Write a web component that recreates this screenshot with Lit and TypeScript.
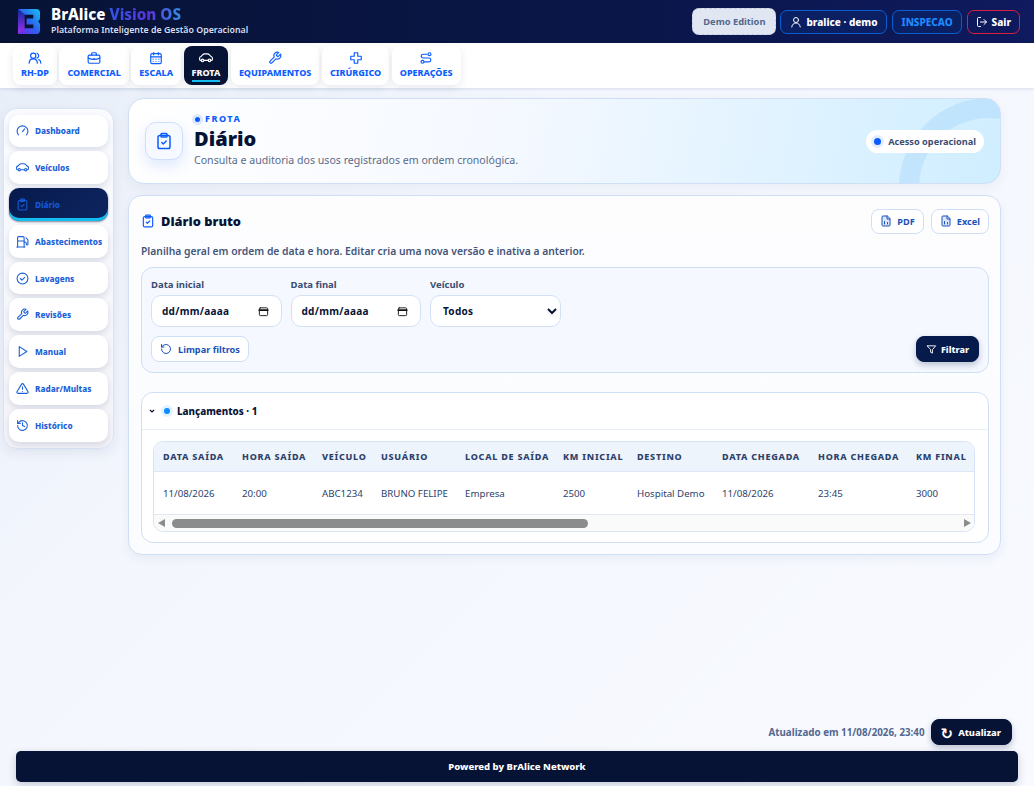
import { LitElement, html, css, svg } from 'lit';
import { customElement } from 'lit/decorators.js';

const icon = (body: unknown, size = 14) => html`<svg
  width=${size}
  height=${size}
  viewBox="0 0 24 24"
  fill="none"
  stroke="currentColor"
  stroke-width="2"
  stroke-linecap="round"
  stroke-linejoin="round"
>${body}</svg>`;

const icons = {
  users: svg`<circle cx="9" cy="8" r="4.500"/><path d="M2 21c0-4.500 3-7.500 7-7.500s7 3 7 7.500"/><path d="M15.500 3.800a4.500 4.500 0 0 1 0 8.400"/><path d="M18.500 14.500c2.200 1 3.500 3.400 3.500 6.500"/>`,
  briefcase: svg`<rect x="2" y="7" width="20" height="14" rx="2"/><path d="M8 7V4.500A1.500 1.500 0 0 1 9.500 3h5A1.500 1.500 0 0 1 16 4.500V7"/><path d="M2 12c6 3 14 3 20 0"/><path d="M12 13v1.500"/>`,
  calendar: svg`<rect x="3" y="4.500" width="18" height="17" rx="2"/><path d="M3 10h18M8 2.500v4M16 2.500v4"/><path d="M7 14h.01M12 14h.01M17 14h.01M7 18h.01M12 18h.01M17 18h.01"/>`,
  car: svg`<path d="M3 16H2.500C1.500 16 1 15 1 14v-2c0-1.500 1.500-2.500 3-3l2-2.500C7 5.500 8 5 9.500 5h5c1.500 0 2.500.5 3.500 1.500l2 2.500c1.800.5 3 1.500 3 3v2c0 1-.5 2-1.500 2H21"/><circle cx="6" cy="16" r="2.200"/><circle cx="18" cy="16" r="2.200"/><path d="M8.500 16h7"/>`,
  wrench: svg`<path d="M14.700 6.300a1 1 0 0 0 0 1.400l1.600 1.600a1 1 0 0 0 1.400 0l3.800-3.800a6 6 0 0 1-7.900 7.900l-6.900 6.900a2.100 2.100 0 0 1-3-3l6.900-6.900a6 6 0 0 1 7.900-7.900z"/>`,
  plus: svg`<path d="M9 3h6v6h6v6h-6v6H9v-6H3V9h6z"/>`,
  ops: svg`<path d="M14 5.500H7a3 3 0 0 0 0 6.500h10a3 3 0 0 1 0 6.500H9"/><circle cx="18" cy="5.500" r="2.500"/><circle cx="6" cy="18.500" r="2.500"/>`,
  user: svg`<circle cx="12" cy="8" r="5"/><path d="M3.500 22c.8-5 4-8 8.500-8s7.700 3 8.500 8"/>`,
  logout: svg`<path d="M9 21H5a2 2 0 0 1-2-2V5a2 2 0 0 1 2-2h4"/><path d="M16 17l5-5-5-5"/><path d="M21 12H9"/>`,
  gauge: svg`<path d="M4.500 20a10 10 0 1 1 15 0"/><path d="M12 14l4-5"/>`,
  clipboard: svg`<rect x="4" y="4.500" width="16" height="17.500" rx="2.500"/><rect x="8" y="2" width="8" height="4.500" rx="1"/><path d="M9 14l2 2 4-4"/>`,
  fuel: svg`<path d="M3 22V5a2 2 0 0 1 2-2h8a2 2 0 0 1 2 2v17"/><path d="M1.500 22h15"/><path d="M3 11h12"/><path d="M15 13h2a2 2 0 0 1 2 2v2a1.500 1.500 0 0 0 3 0V9l-3.500-3.500"/>`,
  check: svg`<circle cx="12" cy="12" r="10"/><path d="M8 12l3 3 5-5"/>`,
  play: svg`<path d="M6 3l14 9-14 9z"/>`,
  alert: svg`<path d="M10.300 3.900L1.800 18a2 2 0 0 0 1.700 3h17a2 2 0 0 0 1.700-3L13.700 3.900a2 2 0 0 0-3.400 0z"/><path d="M12 9v4.500M12 17.500h.01"/>`,
  history: svg`<path d="M3 12a9 9 0 1 0 3-6.700L3 8"/><path d="M3 3v5h5"/><path d="M12 7v5l4 2"/>`,
  file: svg`<path d="M14 2H6a2 2 0 0 0-2 2v16a2 2 0 0 0 2 2h12a2 2 0 0 0 2-2V8z" fill="#dbe6f8"/><path d="M14 2v6h6"/><path d="M9 18v-5M15 18v-3"/>`,
  cal: svg`<rect x="3" y="4" width="18" height="17" rx="2"/><path d="M3 9h18" stroke-width="4"/>`,
  reset: svg`<path d="M3 12a9 9 0 1 0 3-6.700L3 8"/><path d="M3 3v5h5"/>`,
  filter: svg`<path d="M3 4h18l-7 8.500V20l-4-2v-5.500z"/>`,
};

const topTabs = [
  ['RH-DP', icons.users],
  ['COMERCIAL', icons.briefcase],
  ['ESCALA', icons.calendar],
  ['FROTA', icons.car],
  ['EQUIPAMENTOS', icons.wrench],
  ['CIRÚRGICO', icons.plus],
  ['OPERAÇÕES', icons.ops],
] as const;

const sideItems = [
  ['Dashboard', icons.gauge],
  ['Veículos', icons.car],
  ['Diário', icons.clipboard],
  ['Abastecimentos', icons.fuel],
  ['Lavagens', icons.check],
  ['Revisões', icons.wrench],
  ['Manual', icons.play],
  ['Radar/Multas', icons.alert],
  ['Histórico', icons.history],
] as const;

const columns = [
  ['Data saída', 79],
  ['Hora saída', 80],
  ['Veículo', 59],
  ['Usuário', 84],
  ['Local de saída', 98],
  ['KM inicial', 74],
  ['Destino', 85],
  ['Data chegada', 96],
  ['Hora chegada', 98],
  ['KM final', 67],
] as const;
const row = ['11/08/2026', '20:00', 'ABC1234', 'BRUNO FELIPE', 'Empresa', '2500', 'Hospital Demo', '11/08/2026', '23:45', '3000'];

@customElement('app-root')
export class AppRoot extends LitElement {
  static styles = css`
    :host {
      display: flex;
      flex-direction: column;
      height: 786px;
      overflow: hidden;
      font-family: 'Noto Sans', sans-serif;
      color: #071335;
      background: linear-gradient(135deg, #e6edf7 0%, #f3f6fd 35%, #f8faff 100%);
    }
    svg { flex: none; display: block; }
    .topbar {
      height: 43px;
      flex: none;
      box-sizing: border-box;
      display: flex;
      align-items: center;
      padding: 0 14px 0 17px;
      background: linear-gradient(90deg, #071335 0%, #0a1648 60%, #0f1a5f 100%);
    }
    .brand { display: flex; align-items: center; gap: 10px; }
    .brand h1 { margin: 0; font-size: 15.200px; line-height: 18px; font-weight: 800; color: #fff; }
    .brand h1 span {
      background: linear-gradient(90deg, #3154e8, #5a34e0 55%, #2f8fe0);
      -webkit-background-clip: text;
      background-clip: text;
      color: transparent;
    }
    .brand p { margin: 1px 0 3px; font-size: 8.800px; line-height: 12px; font-weight: 600; color: #d7def0; }
    .top-actions { margin-left: auto; display: flex; align-items: center; gap: 4px; }
    .chip {
      height: 24px;
      box-sizing: border-box;
      display: flex;
      align-items: center;
      gap: 4px;
      padding: 0 8px 0 9px;
      border-radius: 7px;
      border: 1px solid #0a5fd0;
      background: #0b1f63;
      color: #fff;
      font-size: 10px;
      font-weight: 800;
    }
    .chip.demo {
      height: 27px;
      padding: 0 10px;
      border: 1px dashed #c3cde2;
      background: #e0e6f2;
      color: #52688f;
      font-size: 9.300px;
      font-weight: 700;
    }
    .chip.role { color: #1d8bff; margin-left: 1px; }
    .chip.exit { border-color: #d8203f; background: transparent; padding-left: 8px; margin-left: 1px; }
    .tabs {
      height: 45px;
      flex: none;
      box-sizing: border-box;
      display: flex;
      gap: 2.500px;
      padding: 3px 13px 0;
      background: #fff;
      box-shadow: 0 1px 3px rgba(30, 60, 120, 0.14);
    }
    .tab {
      height: 39px;
      box-sizing: border-box;
      padding: 5px 8px 0;
      display: flex;
      flex-direction: column;
      align-items: center;
      gap: 2px;
      border-radius: 8px;
      background: #fff;
      color: #0b5cff;
      font-size: 9px;
      line-height: 12px;
      font-weight: 800;
      box-shadow: 0 3px 8px rgba(30, 50, 100, 0.1);
      position: relative;
    }
    .tab.on { background: #071335; color: #fff; }
    .tab.on::after {
      content: '';
      position: absolute;
      left: 8px;
      right: 8px;
      bottom: 3px;
      height: 2px;
      background: #14bdf0;
    }
    .body {
      flex: 1;
      min-height: 0;
      display: flex;
      align-items: flex-start;
      padding: 10px 33px 0 3px;
      gap: 14px;
    }
    .side {
      width: 111px;
      margin-top: 10px;
      box-sizing: border-box;
      padding: 5.500px 5px 6px 5px;
      display: flex;
      flex-direction: column;
      gap: 4px;
      border-radius: 14px;
      border: 1px solid #d9e4f5;
      background: linear-gradient(180deg, #f9fbff, #f4f4f8);
      box-shadow: 0 4px 12px rgba(30, 50, 100, 0.08);
    }
    .side a {
      height: 32.800px;
      box-sizing: border-box;
      display: flex;
      align-items: center;
      gap: 6px;
      padding: 0 5px 0 7px;
      border-radius: 10px;
      background: #fff;
      color: #1b5fd8;
      font-size: 8.200px;
      font-weight: 800;
      white-space: nowrap;
      box-shadow: 0 3px 6px rgba(30, 40, 90, 0.14);
    }
    .side a.on {
      background: linear-gradient(135deg, #071a4c, #0d2560);
      color: #1559d6;
      box-shadow: inset 0 -3px 0 #14bdf0, 0 1px 2px rgba(7, 19, 53, 0.5);
    }
    main { width: 873px; display: flex; flex-direction: column; gap: 11px; }
    .hero {
      height: 86px;
      box-sizing: border-box;
      display: flex;
      align-items: center;
      gap: 11px;
      padding: 0 16px;
      border: 1px solid #cfdff5;
      border-radius: 16px;
      position: relative;
      overflow: hidden;
      background: linear-gradient(100deg, #fff 0%, #f4f8ff 45%, #cfeeff 100%);
      box-shadow: 0 4px 12px rgba(30, 50, 100, 0.05);
    }
    .hero::after {
      content: '';
      position: absolute;
      right: -79px;
      top: -1px;
      width: 180px;
      height: 180px;
      box-sizing: border-box;
      border-radius: 50%;
      border: 20px solid rgba(170, 215, 250, 0.45);
    }
    .hero-icon {
      width: 38px;
      height: 38px;
      box-sizing: border-box;
      display: grid;
      place-items: center;
      border-radius: 11px;
      border: 1px solid #cfe0fb;
      background: #f6f9ff;
      color: #0b5cff;
      box-shadow: 0 6px 14px rgba(40, 100, 240, 0.14);
    }
    .eyebrow {
      display: flex;
      align-items: center;
      gap: 5px;
      margin-top: -2px;
      color: #0b5cff;
      font-size: 9px;
      line-height: 12px;
      font-weight: 800;
      letter-spacing: 1.500px;
    }
    .dot {
      width: 5px;
      height: 5px;
      margin-left: 1px;
      border-radius: 50%;
      background: #0b5cff;
      box-shadow: 0 0 0 3px #dfe9fd;
    }
    .hero h2 { margin: 1px 0 0; font-size: 20px; line-height: 25px; font-weight: 900; color: #071335; }
    .hero p { margin: 2px 0 0; font-size: 10.600px; line-height: 14px; color: #5a6b88; }
    .badge {
      margin-left: auto;
      height: 23px;
      box-sizing: border-box;
      display: flex;
      align-items: center;
      gap: 7px;
      padding: 0 8px;
      border-radius: 12px;
      background: #fff;
      color: #3b4d70;
      font-size: 9.200px;
      font-weight: 700;
      position: relative;
      z-index: 1;
    }
    .badge i {
      width: 7px;
      height: 7px;
      border-radius: 50%;
      background: #0b5cff;
      box-shadow: 0 0 0 3px #e4edff;
    }
    .card {
      height: 360px;
      box-sizing: border-box;
      padding: 12px 11px 11px 12px;
      border: 1px solid #cfdff5;
      border-radius: 14px;
      background: linear-gradient(180deg, #fdfdfe, #fafcff);
      box-shadow: 0 4px 10px rgba(30, 50, 100, 0.06);
    }
    .card-head { height: 26px; display: flex; align-items: center; gap: 6px; color: #0b5cff; }
    .card-head h3 { margin: 0; font-size: 12.800px; font-weight: 900; color: #071335; }
    .card-actions { margin-left: auto; display: flex; gap: 7px; }
    .btn {
      height: 25px;
      box-sizing: border-box;
      display: flex;
      align-items: center;
      gap: 5px;
      padding: 0 8px;
      border: 1px solid #cfdff5;
      border-radius: 8px;
      background: #fff;
      color: #1a52b8;
      font-size: 9.200px;
      font-weight: 700;
    }
    .note { margin: 10px 0 9px; font-size: 10.330px; line-height: 14px; font-weight: 600; color: #44557a; }
    .filters {
      height: 106px;
      box-sizing: border-box;
      padding: 10px 9px 10px 9px;
      border: 1px solid #cfdff5;
      border-radius: 12px;
      background: #f5f8ff;
    }
    .fields { display: flex; gap: 9px; }
    .field label { display: block; font-size: 9.500px; line-height: 13px; font-weight: 700; color: #3b4d70; margin-bottom: 4px; }
    .control {
      width: 130.500px;
      height: 32px;
      box-sizing: border-box;
      display: flex;
      align-items: center;
      justify-content: space-between;
      padding: 0 12px 0 10px;
      border: 1px solid #d3e1f6;
      border-radius: 10px;
      background: #fff;
      color: #071335;
      font-family: inherit;
      font-size: 10px;
      font-weight: 700;
      letter-spacing: 0.300px;
    }
    .control svg { color: #111; }
    .control.sel { padding: 0 8px; }
    .filter-actions { display: flex; justify-content: space-between; align-items: flex-end; margin-top: 9px; }
    .btn.clear { height: 26px; gap: 6px; }
    .btn.dark {
      height: 26px;
      gap: 4px;
      padding: 0 9px;
      background: #071a4c;
      border-color: #071a4c;
      color: #fff;
      font-size: 9px;
      font-weight: 800;
      box-shadow: 0 3px 6px rgba(7, 26, 76, 0.25);
    }
    .group {
      margin-top: 19px;
      height: 151px;
      box-sizing: border-box;
      border: 1px solid #cfdff5;
      border-radius: 12px;
      background: #fff;
    }
    .group-head {
      height: 37px;
      box-sizing: border-box;
      display: flex;
      align-items: center;
      gap: 6px;
      padding: 0 7px;
      border-bottom: 1px solid #e8eef8;
      font-size: 9.800px;
      font-weight: 800;
    }
    .group-head b {
      width: 6px;
      height: 6px;
      margin: 0 1px 0 3px;
      border-radius: 50%;
      background: #0b8cff;
      box-shadow: 0 0 0 3px #e3f2ff;
    }
    .table-wrap {
      margin: 11px 13px 0 11px;
      border: 1px solid #d8e4f5;
      border-radius: 10px;
      overflow: hidden;
    }
    table { width: 100%; table-layout: fixed; border-collapse: collapse; white-space: nowrap; }
    th {
      height: 29px;
      padding: 0 0 0 9px;
      background: #eef4fc;
      border-bottom: 1px solid #dde7f5;
      text-align: left;
      color: #2d426b;
      font-size: 9px;
      font-weight: 800;
      letter-spacing: 0.750px;
      text-transform: uppercase;
    }
    td { height: 42px; padding: 0 0 0 9px; color: #2d426b; font-size: 9.700px; border-bottom: 1px solid #e2e9f4; }
    .scrollbar {
      height: 16px;
      display: flex;
      align-items: center;
      gap: 7px;
      padding: 0 3px 0 4px;
      background: #fafafa;
    }
    .track { flex: 1; height: 9px; }
    .thumb { width: 53%; height: 9px; border-radius: 5px; background: #8c8c8c; }
    .arrow { width: 0; height: 0; border: 4px solid transparent; border-left: 0; border-right: 7px solid #8c8c8c; }
    .arrow.next { border-right: 0; border-left: 7px solid #8c8c8c; }
    .updated {
      flex: none;
      display: flex;
      justify-content: flex-end;
      align-items: center;
      gap: 6px;
      padding: 0 22px 6px 0;
      font-size: 9.800px;
      font-weight: 700;
      color: #52688f;
    }
    .btn.refresh {
      gap: 5px;
      padding: 0 10px 0 9px;
      border-color: #071335;
      background: #071335;
      font-size: 9.300px;
    }
    .spin { font-family: 'DejaVu Sans', sans-serif; font-size: 15px; line-height: 15px; position: relative; top: 2px; }
    footer {
      flex: none;
      height: 31px;
      margin: 0 16px 4px;
      display: grid;
      place-items: center;
      border-radius: 5px;
      background: #071335;
      color: #fff;
      font-size: 9.500px;
      font-weight: 800;
      box-shadow: 0 3px 8px rgba(7, 19, 53, 0.2);
    }
  `;

  render() {
    return html`
      <header class="topbar">
        <div class="brand">
          <svg width="24" height="27" viewBox="0 0 25 28">
            <defs>
              <linearGradient id="logoGrad" x1="0" y1="1" x2="1" y2="0">
                <stop offset="0" stop-color="#7a22e8" />
                <stop offset="0.5" stop-color="#2a63f0" />
                <stop offset="1" stop-color="#19c2ee" />
              </linearGradient>
              <linearGradient id="logoSide" x1="0" y1="0" x2="0" y2="1">
                <stop offset="0" stop-color="#0a2a9a" />
                <stop offset="1" stop-color="#a030f0" />
              </linearGradient>
            </defs>
            <path
              fill="url(#logoGrad)"
              d="M1 1h19c3 0 4 2 4 4v5c0 2-1 3-2 4 1 1 2 2 2 4v5c0 3-2 4-4 4H1l7-6h9v-4h-7v-6h7V7H8z"
            />
            <path fill="url(#logoSide)" d="M1 1l7 6v15l-7 5z" />
          </svg>
          <div>
            <h1>BrAlice <span>Vision OS</span></h1>
            <p>Plataforma Inteligente de Gestão Operacional</p>
          </div>
        </div>
        <div class="top-actions">
          <span class="chip demo">Demo Edition</span>
          <span class="chip">${icon(icons.user, 12)} bralice · demo</span>
          <span class="chip role">INSPECAO</span>
          <span class="chip exit">${icon(icons.logout, 12)} Sair</span>
        </div>
      </header>

      <nav class="tabs">
        ${topTabs.map(
          ([label, glyph]) => html`<div class="tab ${label === 'FROTA' ? 'on' : ''}">${icon(glyph, 14)}<span>${label}</span></div>`
        )}
      </nav>

      <div class="body">
        <aside class="side">
          ${sideItems.map(
            ([label, glyph]) => html`<a class=${label === 'Diário' ? 'on' : ''}>${icon(glyph, 13)}<span>${label}</span></a>`
          )}
        </aside>

        <main>
          <section class="hero">
            <div class="hero-icon">${icon(icons.clipboard, 18)}</div>
            <div>
              <div class="eyebrow"><span class="dot"></span>FROTA</div>
              <h2>Diário</h2>
              <p>Consulta e auditoria dos usos registrados em ordem cronológica.</p>
            </div>
            <div class="badge"><i></i>Acesso operacional</div>
          </section>

          <section class="card">
            <div class="card-head">
              ${icon(icons.clipboard, 14)}
              <h3>Diário bruto</h3>
              <div class="card-actions">
                <span class="btn">${icon(icons.file, 12)} PDF</span>
                <span class="btn">${icon(icons.file, 12)} Excel</span>
              </div>
            </div>
            <p class="note">Planilha geral em ordem de data e hora. Editar cria uma nova versão e inativa a anterior.</p>

            <div class="filters">
              <div class="fields">
                <div class="field">
                  <label>Data inicial</label>
                  <div class="control">dd/mm/aaaa ${icon(icons.cal, 11)}</div>
                </div>
                <div class="field">
                  <label>Data final</label>
                  <div class="control">dd/mm/aaaa ${icon(icons.cal, 11)}</div>
                </div>
                <div class="field">
                  <label>Veículo</label>
                  <select class="control sel"><option>Todos</option></select>
                </div>
              </div>
              <div class="filter-actions">
                <span class="btn clear">${icon(icons.reset, 12)} Limpar filtros</span>
                <span class="btn dark">${icon(icons.filter, 11)} Filtrar</span>
              </div>
            </div>

            <div class="group">
              <div class="group-head">
                <svg width="6" height="6" viewBox="0 0 6 6" fill="none" stroke="currentColor" stroke-width="1.200"><path d="M1 2l2 2 2-2" /></svg>
                <b></b>
                <span>Lançamentos · 1</span>
              </div>
              <div class="table-wrap">
                <table>
                  <colgroup>${columns.map(([, w]) => html`<col width=${w} />`)}</colgroup>
                  <thead><tr>${columns.map(([c]) => html`<th>${c}</th>`)}</tr></thead>
                  <tbody><tr>${row.map((c) => html`<td>${c}</td>`)}</tr></tbody>
                </table>
                <div class="scrollbar">
                  <span class="arrow"></span>
                  <div class="track"><div class="thumb"></div></div>
                  <span class="arrow next"></span>
                </div>
              </div>
            </div>
          </section>
        </main>
      </div>

      <div class="updated">
        <span>Atualizado em 11/08/2026, 23:40</span>
        <span class="btn dark refresh"><span class="spin">↻</span> Atualizar</span>
      </div>
      <footer>Powered by BrAlice Network</footer>
    `;
  }
}
